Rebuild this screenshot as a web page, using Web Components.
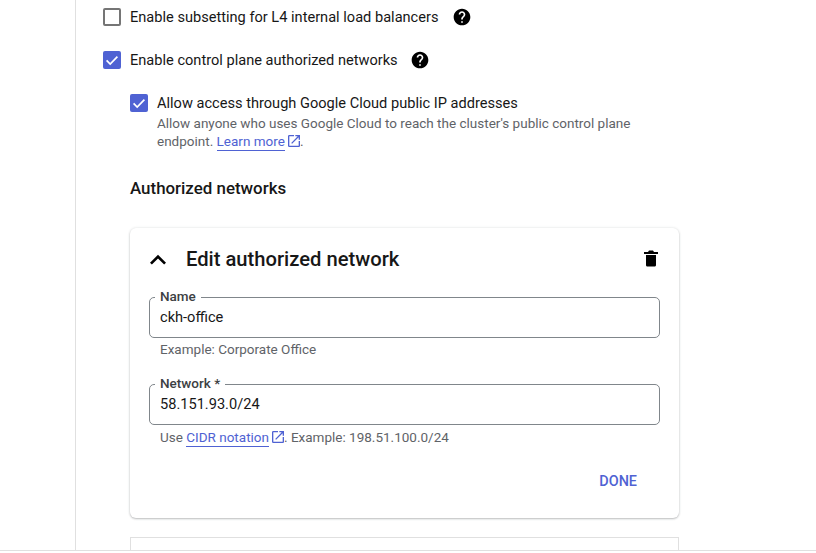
<!DOCTYPE html>
<html>
<head>
<meta charset="utf-8">
<title>Authorized networks</title>
<style>
    html, body { margin: 0; height: 100%; overflow: hidden; background: #fff; }
    body { font-family: Roboto, "Liberation Sans", sans-serif; color: #171717; }
</style>
</head>
<body>
<cluster-page>
    <check-row checked="false" help>Enable subsetting for L4 internal load balancers</check-row>
    <check-row checked="true" help style="--help-gap: 12px">Enable control plane authorized networks</check-row>
    <check-row checked="true" nested>
        Allow access through Google Cloud public IP addresses
        <span slot="hint">Allow anyone who uses Google Cloud to reach the cluster's public control plane<br>endpoint. <ext-link>Learn more</ext-link>.</span>
    </check-row>
    <network-editor>
        <text-field label="Name" value="ckh-office">Example: Corporate Office</text-field>
        <text-field label="Network *" value="58.151.93.0/24">Use <ext-link>CIDR notation</ext-link>. Example: 198.51.100.0/24</text-field>
    </network-editor>
</cluster-page>

<script>
// components

class ClusterPage extends HTMLElement {
    constructor() {
        super();
        this.attachShadow({ mode: "open" });
        this.shadowRoot.innerHTML = `
            <style>
                :host {
                    display: block;
                    width: 816px;
                    height: 553px;
                    overflow: hidden;
                }
                .rule {
                    box-sizing: border-box;
                    height: 551px;
                    border-bottom: 1px solid #e0e0e0;
                }
                .frame {
                    box-sizing: border-box;
                    height: 550px;
                    margin-left: 75px;
                    padding: 8px 0 0 27px;
                    border-left: 1px solid #e0e0e0;
                    overflow: hidden;
                }
            </style>
            <div class="rule"><div class="frame"><slot></slot></div></div>
        `;
    }
}

class CheckRow extends HTMLElement {
    constructor() {
        super();
        this.attachShadow({ mode: "open" });
    }

    connectedCallback() {
        const on = this.getAttribute("checked") === "true";
        const help = this.hasAttribute("help");
        const nested = this.hasAttribute("nested");
        this.shadowRoot.innerHTML = `
            <style>
                :host {
                    display: flex;
                    align-items: flex-start;
                    gap: 9px;
                    font-size: 14.6px;
                    line-height: 18px;
                    color: #171717;
                    margin-bottom: 25px;
                }
                :host([nested]) {
                    margin: 0 0 28px 27px;
                }
                .box {
                    box-sizing: border-box;
                    flex: none;
                    width: 18px;
                    height: 18px;
                    border-radius: 2px;
                    border: 2px solid #757575;
                }
                .box.on {
                    background: #4f62d3;
                    border: none;
                }
                .box svg { display: block; }
                .label { display: flex; align-items: center; gap: var(--help-gap, 14px); height: 18px; }
                .hint {
                    margin-top: 2px;
                    font-size: 13.5px;
                    line-height: 18px;
                    color: #5f6368;
                }
                svg.help { flex: none; }
            </style>
            <div class="box ${on ? "on" : ""}">
                ${on ? `<svg width="18" height="18" viewBox="0 0 18 18"><path d="M3.6 9.4l3.6 3.6 7.2-7.4" fill="none" stroke="#fff" stroke-width="1.7"/></svg>` : ""}
            </div>
            <div>
                <div class="label">
                    <span><slot></slot></span>
                    ${help ? `<svg class="help" width="20" height="20" viewBox="0 0 24 24" fill="#000"><path d="M12 2C6.48 2 2 6.48 2 12s4.48 10 10 10 10-4.48 10-10S17.52 2 12 2zm1 17h-2v-2h2v2zm2.07-7.75l-.9.92C13.45 12.9 13 13.5 13 15h-2v-.5c0-1.1.45-2.1 1.17-2.83l1.24-1.26c.37-.36.59-.86.59-1.41 0-1.1-.9-2-2-2s-2 .9-2 2H8c0-2.21 1.79-4 4-4s4 1.79 4 4c0 .88-.36 1.68-.93 2.25z"/></svg>` : ""}
                </div>
                ${nested ? `<div class="hint"><slot name="hint"></slot></div>` : ""}
            </div>
        `;
    }
}

class ExtLink extends HTMLElement {
    constructor() {
        super();
        this.attachShadow({ mode: "open" });
        this.shadowRoot.innerHTML = `<style>
                :host { display: inline; color: #4f62d3; }
                a { color: inherit; text-decoration: none; border-bottom: 1px solid #4f62d3; padding-bottom: 1px; }
                svg { vertical-align: -3px; margin: 0 -2px 0 1px; }
            </style><a href="#"><slot></slot></a><svg width="16" height="16" viewBox="0 0 24 24" fill="#4f62d3"><path d="M19 19H5V5h7V3H5a2 2 0 0 0-2 2v14a2 2 0 0 0 2 2h14c1.1 0 2-.9 2-2v-7h-2v7zM14 3v2h3.59l-9.83 9.83 1.41 1.41L19 6.41V10h2V3h-7z"/></svg>`;
    }
}

class TextField extends HTMLElement {
    constructor() {
        super();
        this.attachShadow({ mode: "open" });
    }

    connectedCallback() {
        this.shadowRoot.innerHTML = `
            <style>
                :host { display: block; margin-bottom: 27px; }
                .field {
                    position: relative;
                    box-sizing: border-box;
                    height: 41px;
                    border: 1px solid #80868b;
                    border-radius: 5px;
                    padding: 10px 10px 0 10px;
                    font-size: 14.6px;
                    line-height: 18px;
                    color: #171717;
                }
                label {
                    position: absolute;
                    left: 5px;
                    top: -9px;
                    padding: 0 5px;
                    background: #fff;
                    font-size: 13.5px;
                    line-height: 15px;
                    font-weight: 500;
                    color: #3c4043;
                }
                .help {
                    padding: 4px 0 0 11px;
                    font-size: 13.5px;
                    line-height: 15px;
                    color: #5f6368;
                }
            </style>
            <div class="field"><label>${this.getAttribute("label")}</label>${this.getAttribute("value")}</div>
            <div class="help"><slot></slot></div>
        `;
    }
}

class NetworkEditor extends HTMLElement {
    constructor() {
        super();
        this.attachShadow({ mode: "open" });
        this.shadowRoot.innerHTML = `
            <style>
                :host { display: block; width: 549px; margin-left: 27px; }
                h3 { margin: 0 0 30px; font-size: 16.9px; line-height: 20px; font-weight: 500; color: #171717; }
                .card {
                    box-sizing: border-box;
                    height: 290px;
                    border-radius: 6px;
                    background: #fff;
                    padding: 0 19px 0 19px;
                    box-shadow: 0 1px 2px rgba(60,64,67,.3), 0 0 3px rgba(60,64,67,.12);
                    margin-bottom: 19px;
                }
                .head {
                    display: flex;
                    align-items: center;
                    height: 62px;
                    margin-bottom: 7px;
                    font-size: 20.2px;
                    font-weight: 500;
                    color: #171717;
                }
                .head .title { margin-left: 12px; flex: 1; }
                .head svg { display: block; flex: none; }
                .foot { display: flex; justify-content: flex-end; padding-right: 23px; margin-top: 4px; }
                .done { font-size: 14.4px; font-weight: 500; color: #4f62d3; line-height: 20px; }
                .next {
                    box-sizing: border-box;
                    height: 40px;
                    border: 1px solid #e0e0e0;
                    border-bottom: none;
                }
            </style>
            <h3>Authorized networks</h3>
            <div class="card">
                <div class="head">
                    <svg width="32" height="32" viewBox="0 0 24 24" fill="#000" style="margin:2px 0 0 -7px"><path d="M12 8l-6 6 1.41 1.41L12 10.83l4.59 4.58L18 14z"/></svg>
                    <span class="title">Edit authorized network</span>
                    <svg width="24" height="24" viewBox="0 0 24 24" fill="#000" style="margin-right:-3px"><path d="M7 8h10v10c0 1-.8 1.6-1.6 1.6H8.6C7.8 19.6 7 19 7 18zM19 5h-4l-1-1.4h-4L9 5H5v2h14z"/></svg>
                </div>
                <slot></slot>
                <div class="foot"><span class="done">DONE</span></div>
            </div>
            <div class="next"></div>
        `;
    }
}

customElements.define("cluster-page", ClusterPage);
customElements.define("check-row", CheckRow);
customElements.define("ext-link", ExtLink);
customElements.define("text-field", TextField);
customElements.define("network-editor", NetworkEditor);
</script>
</body>
</html>
